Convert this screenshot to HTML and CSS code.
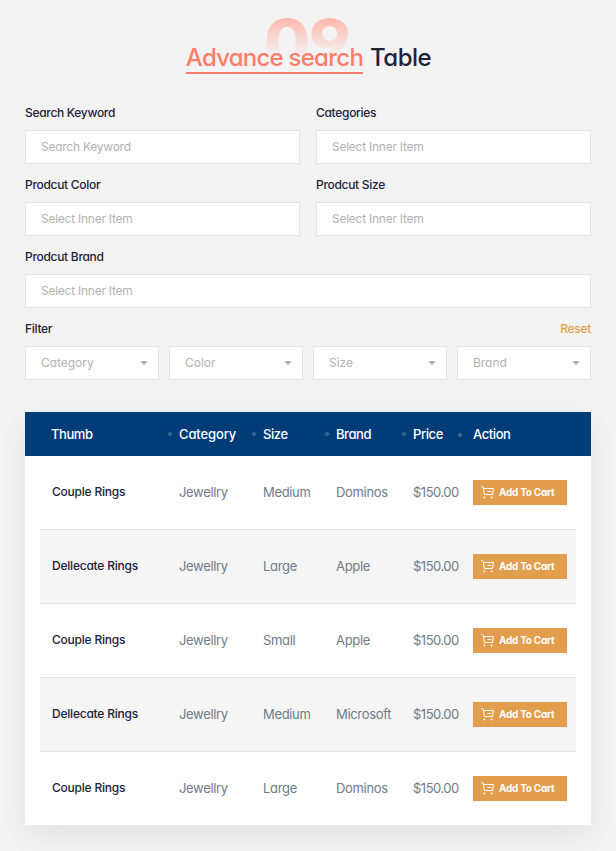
FILE: index.html
```html
<!DOCTYPE html>
<html lang="en">
<head>
<meta charset="utf-8">
<title>Advance search Table</title>
<link rel="stylesheet" href="styles.css">
</head>
<body>
<svg class="defs" width="0" height="0" aria-hidden="true">
  <symbol id="cart" viewBox="0 0 13 13">
    <path d="M.5.7h1.1q.6 0 .7.6l1 7.2h8.2l.9-6H2.5M7 5.5h2.8" fill="none" stroke="currentColor" stroke-width="1" stroke-linecap="round" stroke-linejoin="round"/>
    <circle cx="3.3" cy="11.4" r=".95" fill="currentColor"/>
    <circle cx="10.7" cy="11.4" r=".95" fill="currentColor"/>
  </symbol>
</svg>
<main class="page">
  <header class="title">
    <span class="number">09</span>
    <h1><span class="accent">Advance search</span> <span class="rest">Table</span></h1>
  </header>

  <form class="search">
    <label class="field"><span class="label">Search Keyword</span><input type="text" placeholder="Search Keyword"></label>
    <label class="field"><span class="label">Categories</span><input type="text" placeholder="Select Inner Item"></label>
    <label class="field"><span class="label">Prodcut Color</span><input type="text" placeholder="Select Inner Item"></label>
    <label class="field"><span class="label">Prodcut Size</span><input type="text" placeholder="Select Inner Item"></label>
    <label class="field wide"><span class="label">Prodcut Brand</span><input type="text" placeholder="Select Inner Item"></label>
    <div class="field wide">
      <div class="filter-head"><span class="label">Filter</span><a class="label reset">Reset</a></div>
      <div class="selects">
        <div class="select">Category<i class="caret"></i></div>
        <div class="select">Color<i class="caret"></i></div>
        <div class="select">Size<i class="caret"></i></div>
        <div class="select">Brand<i class="caret"></i></div>
      </div>
    </div>
  </form>

  <section class="table">
    <div class="thead">
      <span>Thumb</span><span class="dot loose">Category</span><span class="dot">Size</span><span class="dot">Brand</span><span class="dot">Price</span><span class="dot last">Action</span>
    </div>
    <div class="row"><strong>Couple Rings</strong><span>Jewellry</span><span>Medium</span><span>Dominos</span><span class="price">$150.00</span><button type="button"><svg><use href="#cart"/></svg><span>Add To Cart</span></button></div>
    <div class="row"><strong>Dellecate Rings</strong><span>Jewellry</span><span>Large</span><span>Apple</span><span class="price">$150.00</span><button type="button"><svg><use href="#cart"/></svg><span>Add To Cart</span></button></div>
    <div class="row"><strong>Couple Rings</strong><span>Jewellry</span><span>Small</span><span>Apple</span><span class="price">$150.00</span><button type="button"><svg><use href="#cart"/></svg><span>Add To Cart</span></button></div>
    <div class="row"><strong>Dellecate Rings</strong><span>Jewellry</span><span>Medium</span><span>Microsoft</span><span class="price">$150.00</span><button type="button"><svg><use href="#cart"/></svg><span>Add To Cart</span></button></div>
    <div class="row"><strong>Couple Rings</strong><span>Jewellry</span><span>Large</span><span>Dominos</span><span class="price">$150.00</span><button type="button"><svg><use href="#cart"/></svg><span>Add To Cart</span></button></div>
  </section>
</main>
</body>
</html>
```
FILE: styles.css
```css
* { box-sizing: border-box; }

body {
  margin: 0;
  height: 851px;
  overflow: hidden;
  background: #f3f3f3;
  color: #1e2139;
  font-family: Inter, "Liberation Sans", sans-serif;
  font-feature-settings: "cv11", "ss01";
}

.defs { position: absolute; }

.page { padding: 44px 25px 0; }

.title {
  position: relative;
  height: 60px;
  text-align: center;
}

.number {
  position: absolute;
  left: 239px;
  top: -33px;
  font-size: 62px;
  font-weight: 800;
  line-height: 62px;
  letter-spacing: -1.5px;
  color: transparent;
  background: linear-gradient(#ffb7ab 6px, #f3f3f3 45px);
  background-clip: text;
  -webkit-background-clip: text;
  transform: scaleX(1.08);
  transform-origin: 0 0;
}

h1 {
  position: relative;
  display: flex;
  justify-content: center;
  gap: 7px;
  margin: 0;
  padding-left: 1px;
  font-size: 24px;
  font-weight: 500;
  line-height: 28px;
}

.accent {
  height: 30px;
  color: #ff7e6b;
  border-bottom: 2px solid #ff7e6b;
  letter-spacing: -.75px;
}

.rest { letter-spacing: -.5px; }

.search {
  display: grid;
  grid-template-columns: 1fr 1fr;
  gap: 12px 16px;
}

.field { display: block; }
.wide { grid-column: 1 / -1; }

.label {
  display: block;
  height: 26px;
  font-size: 12px;
  font-weight: 500;
  line-height: 18px;
  letter-spacing: -.3px;
}

.filter-head { display: flex; justify-content: space-between; }
.reset { color: #e39e4d; }

input, .select {
  display: flex;
  align-items: center;
  width: 100%;
  height: 34px;
  padding: 0 10px 2px 15px;
  border: 1px solid #e2e2e2;
  border-radius: 0;
  background: #fff;
  color: #b3b3b3;
  font: 400 12px Inter, sans-serif;
  font-feature-settings: "cv11", "ss01";
  letter-spacing: -.25px;
}

input::placeholder { color: #b3b3b3; opacity: 1; }

.selects {
  display: grid;
  grid-template-columns: repeat(4, 1fr);
  gap: 10px;
}

.select {
  justify-content: space-between;
  letter-spacing: -.04px;
}

.caret {
  margin-top: 2px;
  border: 4px solid transparent;
  border-top-color: #b3b3b3;
  border-bottom: 0;
}

.table {
  height: 413px;
  margin-top: 32px;
  background: #fff;
  box-shadow: 0 10px 30px rgba(0, 0, 0, .07);
}

.thead, .row {
  display: grid;
  grid-template-columns: 127px 84px 73px 77px 60px 94px;
  align-items: center;
}

.thead {
  height: 44px;
  padding-left: 27px;
  background: #003c77;
  color: #fff;
  font-size: 13px;
  font-weight: 500;
  letter-spacing: -.42px;
}

.thead span:first-child { margin-left: -1px; }
.loose { letter-spacing: -.12px; }

.dot { position: relative; }

.dot::before {
  content: "";
  position: absolute;
  left: -11px;
  top: 6px;
  width: 4px;
  height: 4px;
  background: #33638f;
  transform: rotate(45deg);
}

.dot.last::before { left: -15px; top: 7px; }

.row {
  height: 74px;
  margin: 0 15px;
  padding-left: 12px;
  border-top: 1px solid #e2e4e5;
  color: #6f7b87;
  font-size: 13px;
  letter-spacing: -.33px;
}

.thead + .row { height: 73px; border-top: 0; }
.row:nth-child(odd) { background: #f5f5f5; }

.row > span { padding-bottom: 1px; }
.row .price { letter-spacing: -.5px; }

.row strong {
  padding-bottom: 2px;
  color: #1e2139;
  font-size: 12px;
  font-weight: 500;
  letter-spacing: -.22px;
}

button {
  display: flex;
  align-items: center;
  width: 94px;
  height: 25px;
  padding: 0 0 0 8px;
  border: 0;
  background: #e39e4d;
  color: #fff;
  font: 700 10px Inter, sans-serif;
  font-feature-settings: "cv11", "ss01";
  letter-spacing: -.26px;
}

button svg { width: 13px; height: 13px; margin-right: 5px; }
button span { padding-bottom: 1px; }
```
